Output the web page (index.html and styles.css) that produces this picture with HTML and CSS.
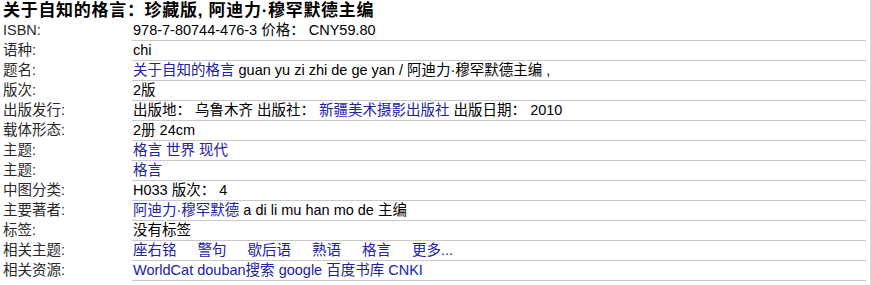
FILE: index.html
```html
<!DOCTYPE html>
<html lang="zh-CN">
<head>
<meta charset="utf-8">
<title>关于自知的格言</title>
<link rel="stylesheet" href="styles.css">
</head>
<body>
<div class="page">
  <h1 class="title">关于自知的格言：珍藏版, 阿迪力·穆罕默德主编</h1>
  <div class="record">
    <div class="label">ISBN:</div>
    <div class="value">978-7-80744-476-3 价格： CNY59.80</div>

    <div class="label">语种:</div>
    <div class="value">chi</div>

    <div class="label">题名:</div>
    <div class="value"><a href="#">关于自知的格言</a> guan yu zi zhi de ge yan / 阿迪力·穆罕默德主编 ,</div>

    <div class="label">版次:</div>
    <div class="value">2版</div>

    <div class="label">出版发行:</div>
    <div class="value">出版地： 乌鲁木齐 出版社： <a href="#">新疆美术摄影出版社</a> 出版日期： 2010</div>

    <div class="label">载体形态:</div>
    <div class="value">2册 24cm</div>

    <div class="label">主题:</div>
    <div class="value"><a href="#">格言 世界 现代</a></div>

    <div class="label">主题:</div>
    <div class="value"><a href="#">格言</a></div>

    <div class="label">中图分类:</div>
    <div class="value">H033 版次： 4</div>

    <div class="label">主要著者:</div>
    <div class="value"><a href="#">阿迪力·穆罕默德</a> a di li mu han mo de 主编</div>

    <div class="label">标签:</div>
    <div class="value">没有标签</div>

    <div class="label">相关主题:</div>
    <div class="value topics">
      <a href="#">座右铭</a>
      <a href="#">警句</a>
      <a href="#">歇后语</a>
      <a href="#">熟语</a>
      <a href="#">格言</a>
      <a href="#">更多...</a>
    </div>

    <div class="label">相关资源:</div>
    <div class="value"><a href="#">WorldCat</a> <a href="#">douban搜索</a> <a href="#">google</a> <a href="#">百度书库</a> <a href="#">CNKI</a></div>
  </div>
</div>
</body>
</html>
```

FILE: styles.css
```css
html, body {
  margin: 0;
  padding: 0;
  background: #ffffff;
}

body {
  font-family: "Liberation Sans", Arial, "Noto Sans CJK SC", sans-serif;
  font-size: 14.5px;
  color: #000000;
}

.page {
  width: 870px;
  height: 285px;
  border-right: 1px solid #d6d6d6;
  box-sizing: content-box;
}

.title {
  margin: 0;
  padding: 1px 0 0 3px;
  font-family: "Liberation Sans", "Noto Sans CJK SC", sans-serif;
  font-size: 17px;
  font-weight: 700;
  line-height: 20px;
  letter-spacing: 0.7px;
  color: #000000;
}

.record {
  display: grid;
  grid-template-columns: 130px 1fr;
  padding: 0 4px 0 2px;
}

.label {
  height: 20px;
  line-height: 19px;
  padding-left: 1px;
  color: #2a2a2a;
  white-space: nowrap;
}

.value {
  height: 19px;
  line-height: 19px;
  padding-left: 1px;
  border-bottom: 1px solid #c9c9c9;
  white-space: nowrap;
}

.value a {
  color: #2222a6;
  text-decoration: none;
}

.topics {
  display: flex;
  gap: 21px;
}
```
